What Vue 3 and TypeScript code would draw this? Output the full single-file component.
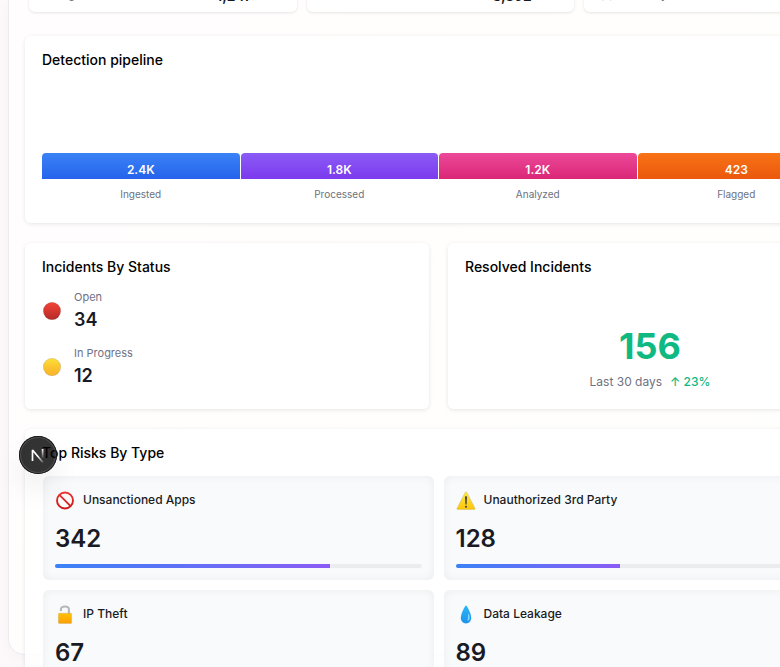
<script setup lang="ts">
interface Stat { label: string; value: string }
interface Stage { name: string; count: string; tone: string }
interface Status { name: string; count: number; tone: string }
interface Risk { name: string; count: number; icon: 'ban' | 'warning' | 'lock' | 'drop'; share: number }

const stats: Stat[] = [
  { label: 'Storage', value: '1,247' },
  { label: 'Users', value: '3,892' },
  { label: 'Apps Weekly', value: '42' },
]
const stages: Stage[] = [
  { name: 'Ingested', count: '2.4K', tone: 'blue' },
  { name: 'Processed', count: '1.8K', tone: 'violet' },
  { name: 'Analyzed', count: '1.2K', tone: 'pink' },
  { name: 'Flagged', count: '423', tone: 'orange' },
]
const statuses: Status[] = [
  { name: 'Open', count: 34, tone: 'red' },
  { name: 'In Progress', count: 12, tone: 'yellow' },
]
const risks: Risk[] = [
  { name: 'Unsanctioned Apps', count: 342, icon: 'ban', share: 75 },
  { name: 'Unauthorized 3rd Party', count: 128, icon: 'warning', share: 45 },
  { name: 'IP Theft', count: 67, icon: 'lock', share: 30 },
  { name: 'Data Leakage', count: 89, icon: 'drop', share: 38 },
]
</script>

<template>
  <div class="page">
    <svg class="defs" width="0" height="0" aria-hidden="true">
      <defs>
        <linearGradient id="g-red" x1="0" y1="0" x2="0" y2="1">
          <stop stop-color="#f44336" /><stop offset="1" stop-color="#b42c28" />
        </linearGradient>
        <linearGradient id="g-yellow" x1="0" y1="0" x2="0" y2="1">
          <stop stop-color="#fbe03a" /><stop offset="0.6" stop-color="#fbc02d" /><stop offset="1" stop-color="#f9b52c" />
        </linearGradient>
        <linearGradient id="g-ban" x1="0" y1="0" x2="0" y2="20" gradientUnits="userSpaceOnUse">
          <stop stop-color="#ee3a35" /><stop offset="1" stop-color="#c81414" />
        </linearGradient>
        <linearGradient id="g-warn" x1="0" y1="0" x2="0" y2="1">
          <stop stop-color="#ffe94a" /><stop offset="1" stop-color="#fdc60a" />
        </linearGradient>
        <linearGradient id="g-lock" x1="0" y1="0" x2="0" y2="1">
          <stop stop-color="#ffc107" /><stop offset="1" stop-color="#ff9f00" />
        </linearGradient>
        <linearGradient id="g-drop" x1="0" y1="0" x2="0" y2="1">
          <stop stop-color="#29b6f6" /><stop offset="1" stop-color="#1e93ea" />
        </linearGradient>
      </defs>
    </svg>

    <main class="shell">
      <section class="stats">
        <div v-for="s in stats" :key="s.label" class="stat">
          <span class="stat-label">{{ s.label }}</span>
          <strong class="stat-value">{{ s.value }}</strong>
        </div>
      </section>

      <section class="panel">
        <h2>Detection pipeline</h2>
        <div class="stages">
          <div v-for="s in stages" :key="s.name" class="stage">
            <div class="bar" :class="s.tone">{{ s.count }}</div>
            <span class="stage-name">{{ s.name }}</span>
          </div>
        </div>
      </section>

      <div class="pair">
        <section class="panel">
          <h2>Incidents By Status</h2>
          <ul class="statuses">
            <li v-for="s in statuses" :key="s.name">
              <svg class="icon" viewBox="0 0 20 20" aria-hidden="true">
                <circle cx="10" cy="10" r="8.7" :fill="`url(#g-${s.tone})`" stroke="#424242" stroke-opacity="0.25" stroke-width="0.6" />
              </svg>
              <div>
                <div class="status-name">{{ s.name }}</div>
                <div class="status-count">{{ s.count }}</div>
              </div>
            </li>
          </ul>
        </section>
        <section class="panel">
          <h2>Resolved Incidents</h2>
          <div class="summary">
            <div class="total">156</div>
            <div class="period"><span>Last 30 days</span><span class="trend">↑ 23%</span></div>
          </div>
        </section>
      </div>

      <section class="panel">
        <h2>Top Risks By Type</h2>
        <div class="risks">
          <article v-for="r in risks" :key="r.name" class="risk">
            <div class="risk-head">
              <svg class="icon" viewBox="0 0 20 20" aria-hidden="true">
                <template v-if="r.icon === 'ban'">
                  <circle cx="10" cy="10.5" r="8" fill="#fafafa" />
                  <path d="M4.4 4.9l11.2 11.2" stroke="url(#g-ban)" stroke-width="1.8" />
                  <circle cx="10" cy="10.5" r="8" fill="none" stroke="url(#g-ban)" stroke-width="1.9" />
                </template>
                <template v-else-if="r.icon === 'warning'">
                  <path d="M9.2 2.3Q10 1.1 10.8 2.3L18.9 18.2Q19.3 19.4 18.2 19.4H1.8Q.7 19.4 1.1 18.2Z" fill="url(#g-warn)" stroke="#9a8a3a" stroke-opacity="0.45" stroke-width="0.5" />
                  <path d="M9 6.6Q10 5.8 11 6.6L10.6 14.6H9.4Z" fill="#424242" />
                  <circle cx="10" cy="16.7" r="1.05" fill="#424242" />
                </template>
                <template v-else-if="r.icon === 'lock'">
                  <path d="M5.9 7.1V5.5Q5.9 2.5 10 2.5T13.9 5.5V10" fill="none" stroke="#b4b8ba" stroke-width="2.1" />
                  <rect x="3.4" y="9.2" width="13.2" height="10.2" rx="0.7" fill="url(#g-lock)" stroke="#9e9060" stroke-opacity="0.45" stroke-width="0.5" />
                </template>
                <template v-else>
                  <path d="M10 1.6C9.2 1.6 4.8 9.6 4.8 13.8 4.8 17.2 7 19.4 10 19.4S15.2 17.2 15.2 13.8C15.2 9.6 10.8 1.6 10 1.6Z" fill="url(#g-drop)" />
                  <path d="M12.8 9.8C14 12.1 14.3 15.8 12.2 16.8 10.8 16.6 12.4 13.1 11.9 10.4Z" fill="#81d4fa" />
                </template>
              </svg>
              <span>{{ r.name }}</span>
            </div>
            <div class="risk-count">{{ r.count }}</div>
            <div class="track"><div class="fill" :style="{ width: r.share + '%' }"></div></div>
          </article>
        </div>
      </section>
    </main>

    <button class="dev" type="button" aria-label="Open developer tools">
      <svg width="38" height="38" viewBox="0 0 38 38" fill="none">
        <defs>
          <linearGradient id="dev-diag" x1="19" y1="20" x2="25" y2="27" gradientUnits="userSpaceOnUse">
            <stop stop-color="#fff" /><stop offset="1" stop-color="#fff" stop-opacity="0.1" />
          </linearGradient>
          <linearGradient id="dev-stem" x1="24" y1="13" x2="24" y2="23" gradientUnits="userSpaceOnUse">
            <stop stop-color="#fff" /><stop offset="1" stop-color="#fff" stop-opacity="0" />
          </linearGradient>
        </defs>
        <path d="M13.5 25V14L24 26.5" stroke="url(#dev-diag)" stroke-width="1.7" stroke-linejoin="bevel" />
        <path d="M23.6 13V22.5" stroke="url(#dev-stem)" stroke-width="1.7" />
      </svg>
    </button>
  </div>
</template>

<style>
body { margin: 0; }
</style>

<style scoped>
* { box-sizing: border-box; }
.page {
  position: relative;
  height: 100vh;
  overflow: hidden;
  padding: 0 0 12px 8px;
  background: linear-gradient(90deg, #fdf9fb, #fffdfd 50%, #fefefe);
  font-family: Inter, "Liberation Sans", sans-serif;
  color: #1a1a24;
}
.defs { position: absolute; }
.shell {
  display: flow-root;
  width: calc(100% + 89px);
  height: 100%;
  padding: 0 16px;
  border: 1px solid #ececef;
  border-top: 0;
  border-radius: 0 0 16px 16px;
  background: linear-gradient(120deg, #fffdfe, #fffefc 50%, #fefefe);
  box-shadow: 0 4px 16px rgba(0, 0, 0, 0.03);
}
.stats {
  display: grid;
  grid-template-columns: repeat(3, 1fr);
  gap: 10px;
  margin: -34px 0 24px;
  padding-left: 4px;
}
.stat {
  display: grid;
  grid-template-columns: 1fr 1fr;
  gap: 10px;
  align-items: end;
  height: 46px;
  padding: 0 0 6px 9px;
  border-radius: 6px;
  background: #fff;
  box-shadow: 0 1px 3px rgba(0, 0, 0, 0.1);
}
.stat-label { font-size: 12px; line-height: 24px; color: #717182; }
.stat-value { font-size: 14px; font-weight: 600; line-height: 20px; text-align: center; }
.panel {
  margin-bottom: 20px;
  padding: 16px 17px 17px;
  border-radius: 6px;
  background: rgba(255, 255, 255, 0.85);
  box-shadow: 0 1px 4px rgba(0, 0, 0, 0.1);
}
h2 {
  margin: 0;
  font-size: 14px;
  font-weight: 500;
  line-height: 16px;
  color: #000;
}
.stages {
  display: grid;
  grid-template-columns: repeat(4, 1fr);
  gap: 1px;
  padding-top: 85px;
}
.stage { text-align: center; }
.bar {
  height: 26px;
  padding-top: 8px;
  border-radius: 4px 4px 0 0;
  font-size: 12px;
  font-weight: 600;
  line-height: 18px;
  color: #fff;
}
.blue { background: linear-gradient(#3b82f6, #2563eb); }
.violet { background: linear-gradient(#8b5cf6, #7c3aed); }
.pink { background: linear-gradient(#ec4899, #db2777); }
.orange { background: linear-gradient(#f97316, #ea580c); }
.stage-name {
  display: block;
  margin-top: 7px;
  padding-bottom: 4px;
  font-size: 10px;
  line-height: 16px;
  color: #6b7280;
}
.pair {
  display: grid;
  grid-template-columns: 1fr 1fr;
  gap: 19px;
}
.statuses {
  display: grid;
  gap: 13px;
  margin: 14px 0 4px;
  padding: 0;
  list-style: none;
}
.statuses li { display: flex; align-items: center; gap: 12px; }
.icon { display: block; flex: none; width: 20px; height: 20px; }
.status-name { margin-bottom: 3px; font-size: 11px; line-height: 16px; color: #717182; }
.status-count { font-size: 18px; font-weight: 600; line-height: 24px; }
.summary { margin-top: 49px; text-align: center; }
.total { font-size: 36px; font-weight: 700; line-height: 44px; color: #10b981; }
.period {
  display: flex;
  justify-content: center;
  gap: 8px;
  margin-top: 5px;
  font-size: 12px;
  line-height: 18px;
  color: #717182;
}
.trend { font-weight: 500; color: #10b981; }
.risks {
  display: grid;
  grid-template-columns: 1fr 1fr;
  gap: 10px;
  margin-top: 15px;
  padding: 0 1px;
}
.risk {
  height: 104px;
  padding: 14px 12px 12px;
  border-radius: 6px;
  background: rgba(247, 249, 251, 0.9);
  box-shadow: inset 0 0 10px rgba(0, 0, 0, 0.06);
}
.risk-head {
  display: flex;
  align-items: center;
  gap: 8px;
  font-size: 12px;
  font-weight: 500;
  line-height: 20px;
}
.risk-count { margin-top: 13px; font-size: 24px; font-weight: 600; line-height: 32px; }
.track {
  height: 4px;
  margin-top: 9px;
  border-radius: 2px;
  overflow: hidden;
  background: #ebecee;
}
.fill { height: 100%; background: linear-gradient(90deg, #3b82f6, #8b5cf6); }
.dev {
  position: absolute;
  left: 19px;
  bottom: 193px;
  width: 38px;
  height: 38px;
  padding: 0;
  border: 0;
  border-radius: 50%;
  background: rgba(0, 0, 0, 0.8);
  box-shadow: inset 0 0 0 1px #171717, inset 0 0 0 2px rgba(255, 255, 255, 0.14), 0 16px 32px -8px rgba(0, 0, 0, 0.2);
}
.dev svg { display: block; }
</style>
